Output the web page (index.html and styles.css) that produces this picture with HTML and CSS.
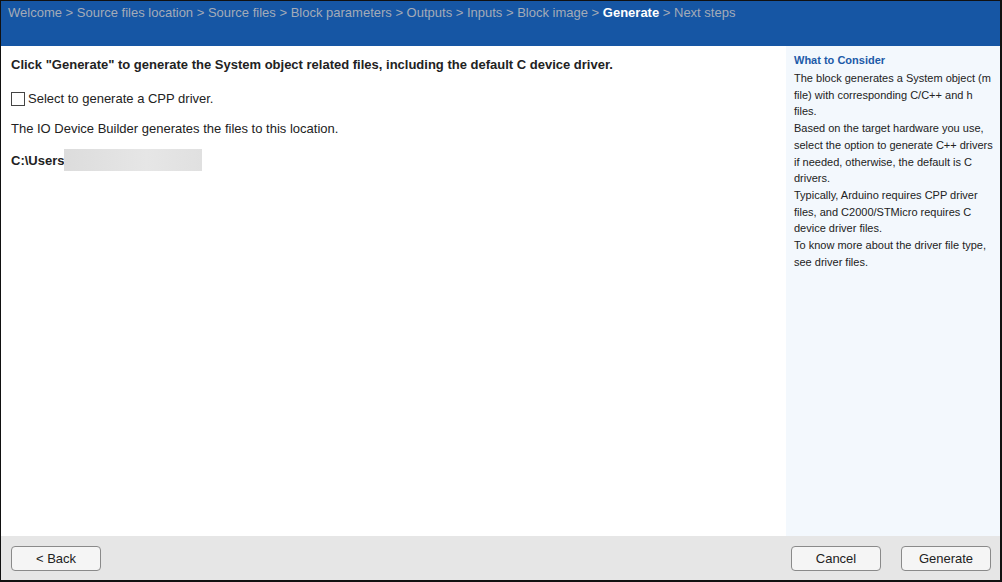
FILE: index.html
```html
<!DOCTYPE html>
<html>
<head>
<meta charset="utf-8">
<link rel="stylesheet" href="styles.css">
</head>
<body>
<div class="app">
  <header class="header">
    <nav class="crumbs">Welcome &gt; Source files location &gt; Source files &gt; Block parameters &gt; Outputs &gt; Inputs &gt; Block image &gt; <span class="current">Generate</span> &gt; Next steps</nav>
  </header>
  <main class="main">
    <section class="content">
      <p class="title">Click "Generate" to generate the System object related files, including the default C device driver.</p>
      <label class="check"><span class="box"></span>Select to generate a CPP driver.</label>
      <p class="text">The IO Device Builder generates the files to this location.</p>
      <p class="path">C:\Users<span class="blur"></span></p>
    </section>
    <aside class="side">
      <h3 class="side-title">What to Consider</h3>
      <p class="side-text">The block generates a System object (m file) with corresponding C/C++ and h files.<br>Based on the target hardware you use, select the option to generate C++ drivers if needed, otherwise, the default is C drivers.<br>Typically, Arduino requires CPP driver files, and C2000/STMicro requires C device driver files.<br>To know more about the driver file type, see driver files.</p>
    </aside>
  </main>
  <footer class="footer">
    <button class="btn">&lt; Back</button>
    <div class="right-btns">
      <button class="btn">Cancel</button>
      <button class="btn">Generate</button>
    </div>
  </footer>
</div>
</body>
</html>
```
FILE: styles.css
```css
* { box-sizing: border-box; }
html, body { margin: 0; padding: 0; }
body {
  width: 1002px;
  height: 582px;
  font-family: "Liberation Sans", Arial, sans-serif;
  color: #222;
  background: #fff;
}
.app {
  width: 1002px;
  height: 582px;
  border: 1px solid #111;
  border-right-width: 2px;
  border-bottom-width: 2px;
  display: flex;
  flex-direction: column;
}
.header {
  height: 45px;
  background: #1656a4;
  padding: 4px 0 0 7px;
  flex: none;
}
.crumbs {
  font-size: 13px;
  color: #a3abb8;
  white-space: nowrap;
}
.crumbs .current {
  color: #fff;
  font-weight: bold;
}
.main {
  flex: 1;
  display: flex;
  min-height: 0;
}
.content {
  flex: 1;
  padding: 11px 10px;
}
.title {
  margin: 0;
  font-size: 13px;
  font-weight: bold;
  color: #222;
}
.check {
  display: flex;
  align-items: center;
  margin-top: 19px;
  font-size: 13px;
  color: #222;
}
.box {
  width: 14px;
  height: 14px;
  border: 1px solid #444;
  background: #fff;
  margin-right: 3px;
  flex: none;
}
.text {
  margin: 15px 0 0;
  font-size: 13px;
}
.path {
  margin: 13px 0 0;
  font-size: 13px;
  font-weight: bold;
  display: flex;
  align-items: center;
}
.blur {
  display: inline-block;
  width: 138px;
  height: 22px;
  background: linear-gradient(90deg, #dcdcdc, #e6e6e6 60%, #e0e0e0);
}
.side {
  width: 214px;
  flex: none;
  background: #f3f8fd;
  padding: 8px 2px 0 8px;
}
.side-title {
  margin: 0 0 4px;
  font-size: 11px;
  font-weight: bold;
  color: #1c5aa8;
}
.side-text {
  margin: 0;
  font-size: 11px;
  line-height: 16.7px;
  color: #222;
}
.footer {
  height: 44px;
  flex: none;
  background: #e6e6e6;
  display: flex;
  justify-content: space-between;
  align-items: center;
  padding: 1px 9px 0 10px;
}
.right-btns {
  display: flex;
  gap: 20px;
}
.btn {
  width: 90px;
  height: 25px;
  border: 1px solid #8a8a8a;
  border-radius: 4px;
  background: #f5f5f5;
  font-family: "Liberation Sans", Arial, sans-serif;
  font-size: 13px;
  color: #222;
  padding: 0;
}
```
